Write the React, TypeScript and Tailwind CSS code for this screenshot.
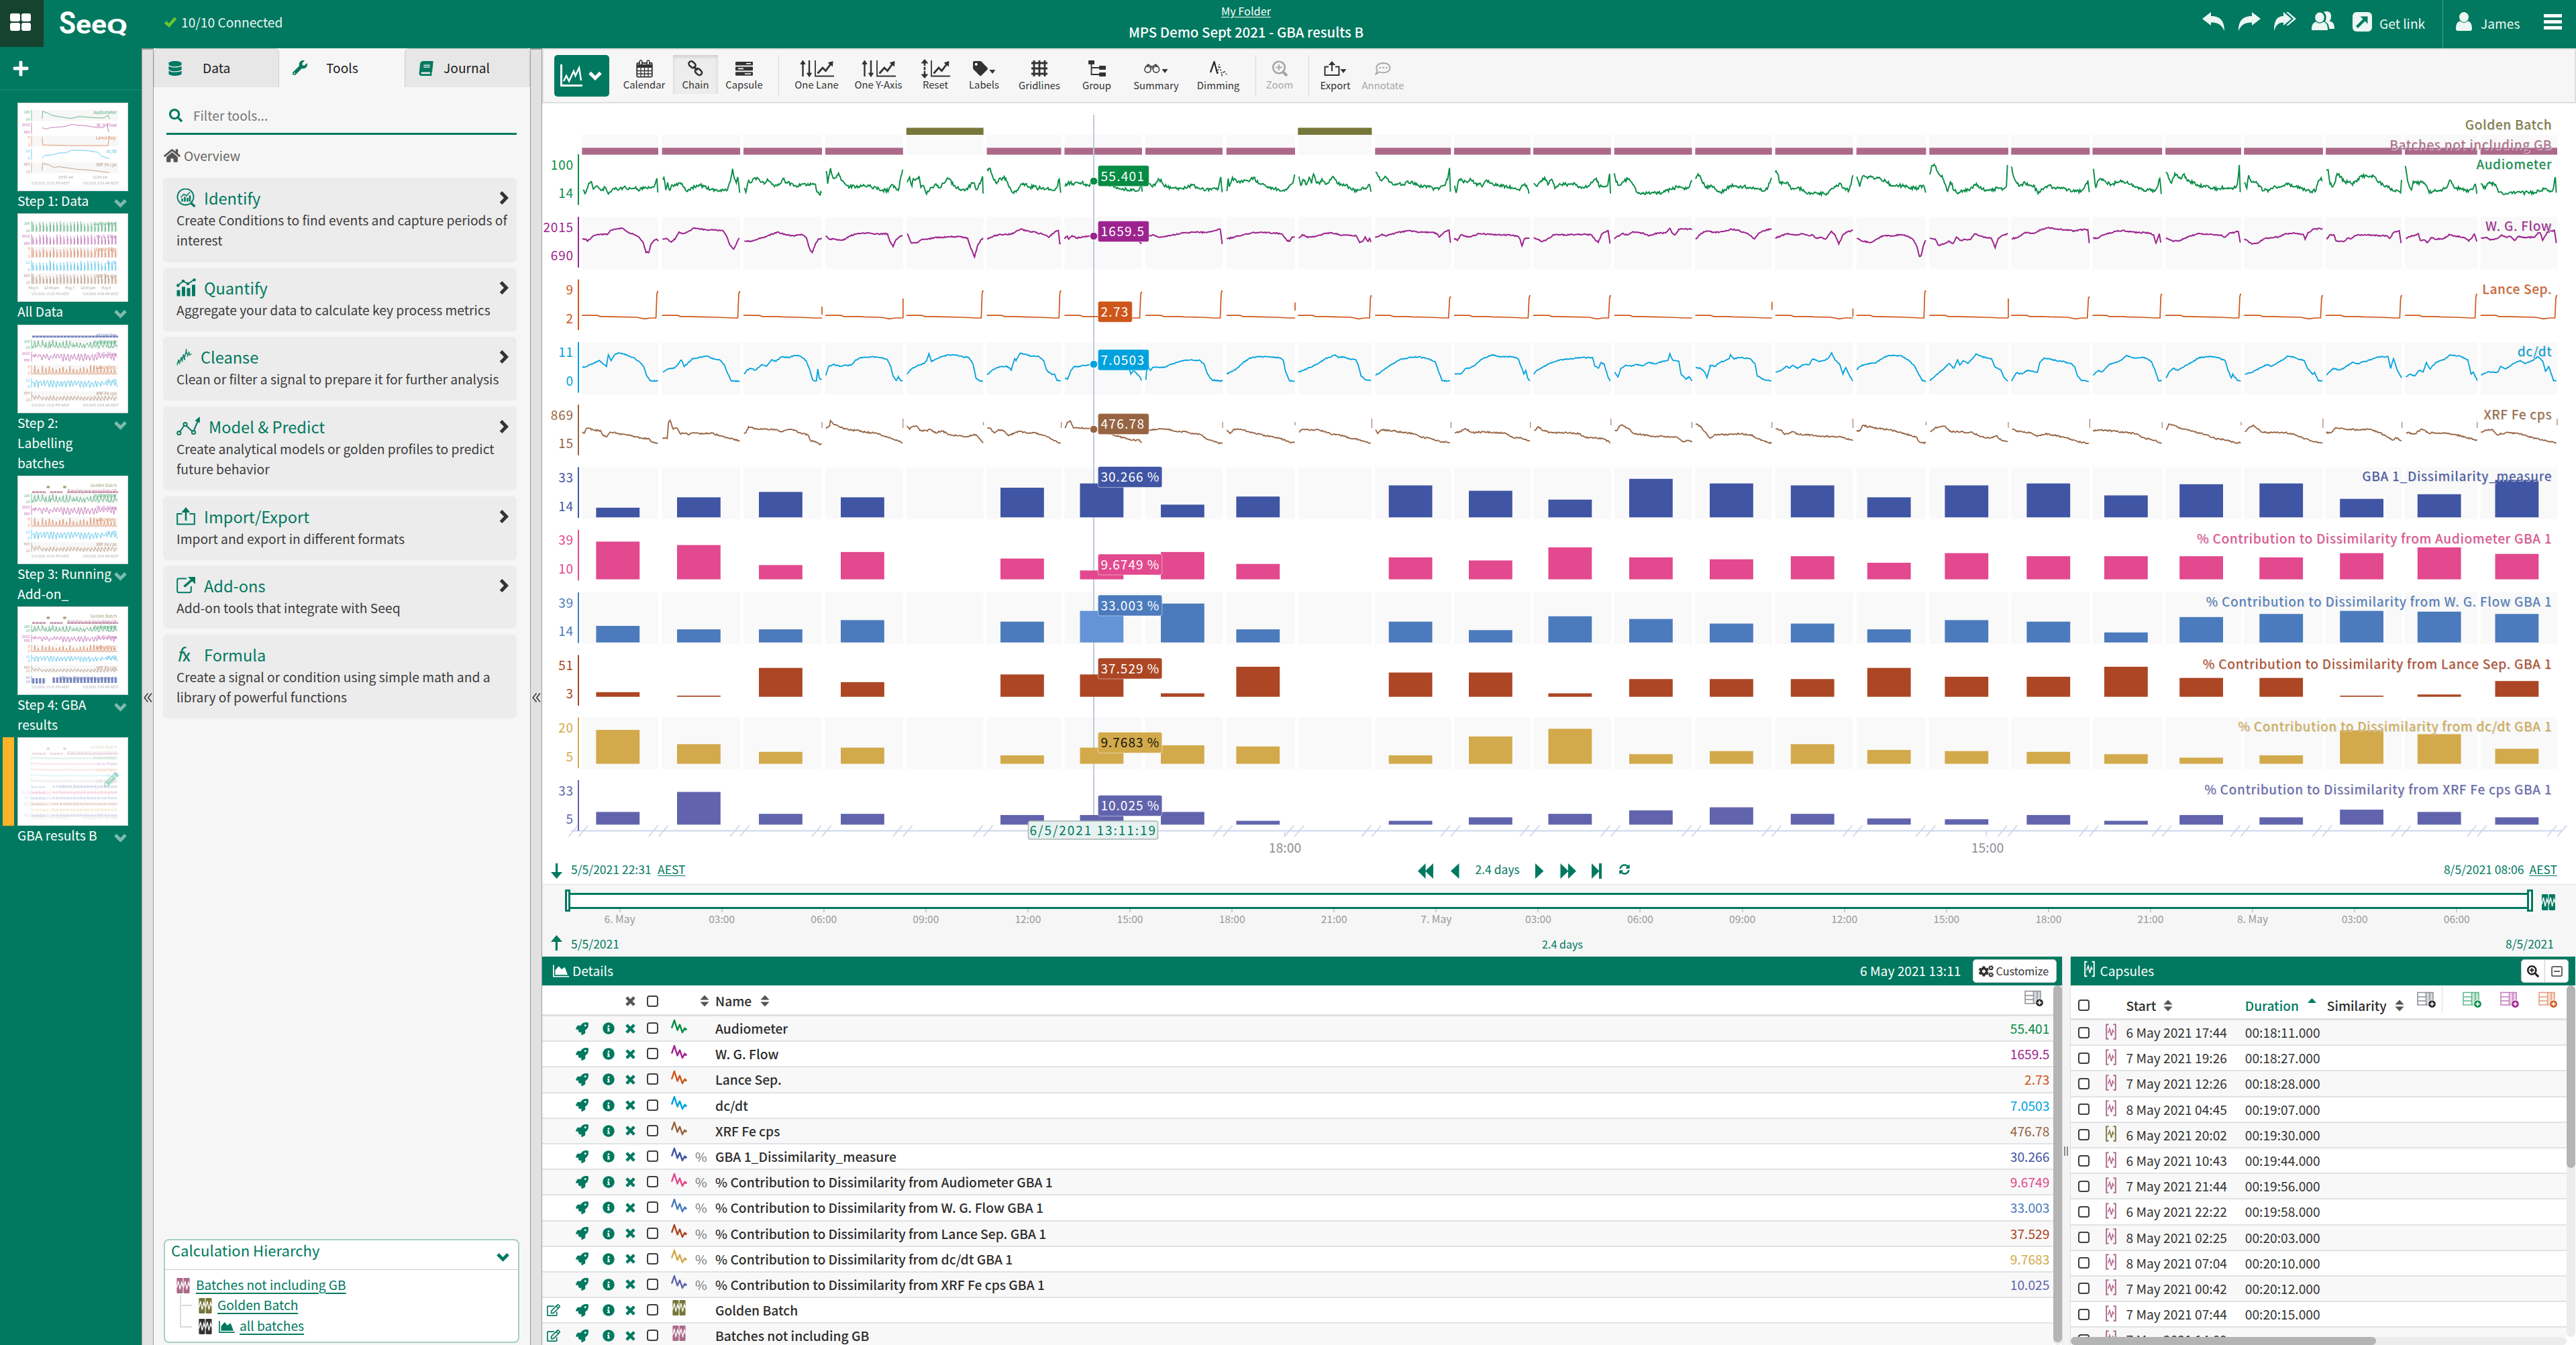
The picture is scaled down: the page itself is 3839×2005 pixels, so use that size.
import type { ReactNode } from 'react';
import {
  FaBook, FaCogs, FaDatabase, FaHome, FaInfoCircle, FaPencilAlt,
  FaPlus, FaRegEdit, FaRocket, FaSearch, FaSearchPlus, FaSyncAlt, FaTag, FaWrench,
} from 'react-icons/fa';

/* ------------------------------------------------------------------ */
/* Colours                                                            */
/* ------------------------------------------------------------------ */
const C = {
  audio: '#068c45', flow: '#9d248f', lance: '#ce561b', dcdt: '#00a2dd', xrf: '#976443',
  gba: '#4055a3', pAudio: '#e2498e', pFlow: '#4b7bbd', pLance: '#ac4624', pDcdt: '#d2aa4b', pXrf: '#6164ac',
  golden: '#77763a', batches: '#ad698a', brand: '#007960',
};

/* ------------------------------------------------------------------ */
/* Icons                                                              */
/* ------------------------------------------------------------------ */
function ChevronDown({ className }: { className: string }) {
  return (
    <svg className={className} viewBox="0 0 20 14" fill="none" stroke="currentColor" strokeWidth="5">
      <path d="M2 2.5 L10 10.5 L18 2.5" />
    </svg>
  );
}

function ChevronRight({ className }: { className: string }) {
  return (
    <svg className={className} viewBox="0 0 14 20" fill="none" stroke="currentColor" strokeWidth="5">
      <path d="M2.5 1.8 L10.5 10 L2.5 18.2" />
    </svg>
  );
}

function Cross({ className }: { className: string }) {
  return (
    <svg className={className} viewBox="0 0 15 15" fill="none" stroke="currentColor" strokeWidth="4.4">
      <path d="M1.8 1.8 L13.2 13.2 M13.2 1.8 L1.8 13.2" />
    </svg>
  );
}

function Trend({ color }: { color: string }) {
  return (
    <svg width="24" height="22" viewBox="0 0 24 22" fill="none" stroke={color} strokeWidth="2.4" strokeLinejoin="round">
      <path d="M1 13.5 L5 2 L9.5 16.5 L13 8.5 L17 20 L20.5 13.5 L21.5 16 L23.5 14.5" />
    </svg>
  );
}

function Condition({ color, className }: { color: string; className: string }) {
  return (
    <svg className={className} viewBox="0 0 20 24">
      <rect x="0" y="0" width="9.4" height="24" rx="1.4" fill={color} />
      <rect x="10.6" y="0" width="9.4" height="24" rx="1.4" fill={color} />
      <path d="M0 15 L2.6 5 L5 18 L7.6 7 L9.4 13 M10.6 15 L13.2 5 L15.6 18 L18.2 7 L20 13" fill="none" stroke="#fff" strokeWidth="1.4" />
    </svg>
  );
}

function CapsuleIcon({ color, className }: { color: string; className: string }) {
  return (
    <svg className={className} viewBox="0 0 16 24" fill="none" stroke={color}>
      <path d="M4.5 1.2 H1.2 V22.8 H4.5 M11.5 1.2 H14.8 V22.8 H11.5" strokeWidth="1.9" />
      <path d="M3.6 14 L6 7.5 L8.6 18 L10.6 9.5 L12.4 13" strokeWidth="1.5" />
    </svg>
  );
}

function TablePlus({ color, dark }: { color: string; dark: string }) {
  return (
    <svg width="29" height="25" viewBox="0 0 29 25" fill="none">
      <path d="M14 1 H24 V20 H14 Z" fill={color} opacity=".35" />
      <path d="M1 1.5 H24 V20 H1 Z M13.5 1 V20 M19 1 V20 M1 8 H13 M1 14 H13" stroke={color} strokeWidth="1.5" />
      <circle cx="22.5" cy="18.7" r="5.8" fill={dark} stroke="#fff" strokeWidth="1" />
      <path d="M22.5 15.6 V21.8 M19.4 18.7 H25.6" stroke="#fff" strokeWidth="1.8" />
    </svg>
  );
}

function AreaChart({ className }: { className: string }) {
  return (
    <svg className={className} viewBox="0 0 25 19" fill="currentColor">
      <path d="M0 0 H1.8 V17.2 H25 V19 H0 Z" />
      <path d="M3.5 15.5 V8.5 L9 2 L13.5 7 L18.5 3.5 L23 15.5 Z" />
    </svg>
  );
}

function Sort() {
  return (
    <svg width="14" height="18" viewBox="0 0 14 18" fill="#555">
      <path d="M7 0.5 L13.6 7.6 H0.4 Z M7 17.5 L13.6 10.4 H0.4 Z" />
    </svg>
  );
}

function Checkbox() {
  return <span className="block h-[17px] w-[17px] rounded-[4px] border-2 border-[#3f3f3f] bg-white" />;
}

function MiniChart({ x, y }: { x: number; y: number }) {
  return (
    <g transform={`translate(${x} ${y})`}>
      <path d="M1 0 V23.5 H29" fill="none" stroke="#333" strokeWidth="1.8" />
      <path d="M4.5 19.5 L12 11 L16.5 15.5 L25 4" fill="none" stroke="#333" strokeWidth="2.8" />
      <path d="M19.5 3.5 L27.5 1 L27 9.5 Z" fill="#333" />
    </g>
  );
}

const upDown = (
  <g stroke="#333" strokeWidth="2.4" fill="#333">
    <path d="M4.5 25 V4" />
    <path d="M4.5 1 L8 6.5 H1 Z" strokeWidth="1" />
    <path d="M14 1 V22" />
    <path d="M14 25.5 L17.5 20 H10.5 Z" strokeWidth="1" />
  </g>
);

const caret = (x: number, y: number) => <path d={`M${x} ${y} h9 l-4.5 6 z`} fill="#333" />;

const toolIcons: Record<string, ReactNode> = {
  Calendar: (
    <svg width="25" height="27" viewBox="0 0 25 27" fill="none" stroke="#333">
      <rect x="1.2" y="5" width="22.6" height="20.6" rx="1.5" strokeWidth="1.8" />
      <path d="M1 9.5 H24" strokeWidth="5" />
      <path d="M7 12 V25 M12.5 12 V25 M18 12 V25 M1 16.5 H24 M1 21 H24" strokeWidth="1.3" />
      <rect x="5.2" y="1" width="3.6" height="7" rx="1.8" fill="#f6f6f6" strokeWidth="1.5" />
      <rect x="16.2" y="1" width="3.6" height="7" rx="1.8" fill="#f6f6f6" strokeWidth="1.5" />
    </svg>
  ),
  Chain: (
    <svg width="25" height="24" viewBox="0 0 25 24" fill="none" stroke="#333" strokeWidth="2.6">
      <rect x="2.2" y="2.5" width="11" height="7.4" rx="3.6" transform="rotate(42 7.5 6)" />
      <rect x="11.2" y="13.5" width="11" height="7.4" rx="3.6" transform="rotate(42 17 17.5)" />
      <path d="M9.5 9 L15.5 14.8" />
    </svg>
  ),
  Capsule: (
    <svg width="26" height="21" viewBox="0 0 26 21" fill="#333">
      <rect width="26" height="5.6" rx="1" />
      <rect y="7.6" width="26" height="5.6" rx="1" />
      <rect y="15.2" width="26" height="5.6" rx="1" />
      <path d="M16 2.8 H23 M4 10.4 H12 M14 18 H23" stroke="#fff" strokeWidth="1.6" />
    </svg>
  ),
  'One Lane': (
    <svg width="51" height="27" viewBox="0 0 51 27">{upDown}<MiniChart x={22} y={1} /></svg>
  ),
  'One Y-Axis': (
    <svg width="51" height="27" viewBox="0 0 51 27">{upDown}<MiniChart x={22} y={1} /></svg>
  ),
  Reset: (
    <svg width="45" height="29" viewBox="0 0 45 29">
      <path d="M6 5 V24" stroke="#333" strokeWidth="2.6" strokeDasharray="5 1.5" />
      <path d="M6 0 L11.5 6.5 H0.5 Z M6 29 L11.5 22.5 H0.5 Z" fill="#333" />
      <MiniChart x={15} y={2} />
    </svg>
  ),
  Labels: (
    <span className="flex items-end">
      <FaTag className="mr-[2px] h-[22px] w-[22px] text-[#333]" />
      <svg width="10" height="12" viewBox="0 0 10 12">{caret(0.5, 3)}</svg>
    </span>
  ),
  Gridlines: (
    <svg width="24" height="24" viewBox="0 0 24 24" stroke="#333" strokeWidth="2.8">
      <path d="M4 0 V24 M12 0 V24 M20 0 V24 M0 4 H24 M0 12 H24 M0 20 H24" />
    </svg>
  ),
  Group: (
    <svg width="26" height="24" viewBox="0 0 26 24" fill="#333">
      <rect width="9" height="6" rx="1" />
      <rect x="16" y="8" width="10" height="6" rx="1" />
      <rect x="16" y="18" width="10" height="6" rx="1" />
      <path d="M4.5 5 V21 H17 M4.5 11 H17" fill="none" stroke="#333" strokeWidth="1.8" />
    </svg>
  ),
  Summary: (
    <span className="flex items-end">
      <svg width="26" height="16" viewBox="0 0 26 16" fill="none" stroke="#444" strokeWidth="1.6">
        <circle cx="5.5" cy="9.5" r="4.6" />
        <circle cx="18" cy="9.5" r="4.6" />
        <path d="M2 6 L6 2 L10.5 5 V9 M21.5 6 L17.5 2 L13 5 V9 M10.5 5 H13" />
      </svg>
      <svg width="10" height="10" viewBox="0 0 10 10">{caret(0.5, 3)}</svg>
    </span>
  ),
  Dimming: (
    <svg width="26" height="23" viewBox="0 0 26 23" fill="none" stroke="#222">
      <path d="M1 17 L6.5 1 L11.5 19" strokeWidth="2.2" />
      <path d="M11.5 18 L14 5 L18 21 L21 14.5 L25 20" strokeWidth="1.6" strokeDasharray="1.8 2.4" />
    </svg>
  ),
  Zoom: (
    <svg width="25" height="25" viewBox="0 0 25 25" fill="none" stroke="#a6a6a6">
      <circle cx="11" cy="10.5" r="8.8" strokeWidth="2.6" />
      <path d="M17 17 L23 23" strokeWidth="4" />
      <path d="M11 6 V15 M6.5 10.5 H15.5" strokeWidth="1.8" />
    </svg>
  ),
  Export: (
    <span className="flex items-end">
      <svg width="24" height="22" viewBox="0 0 24 22" fill="none" stroke="#333" strokeWidth="2">
        <path d="M7 8.5 H1.5 V21 H22.5 V8.5 H17 M12 15 V4" />
        <path d="M12 0 L17.2 6 H6.8 Z" fill="#333" stroke="none" />
      </svg>
      <svg width="10" height="13" viewBox="0 0 10 13">{caret(0.5, 3)}</svg>
    </span>
  ),
  Annotate: (
    <svg width="24" height="19" viewBox="0 0 24 19" fill="none" stroke="#a6a6a6" strokeWidth="1.8">
      <path d="M12.5 1 C18.5 1 22.5 4 22.5 8.2 C22.5 12.3 18.5 15.3 12.5 15.3 C10.5 15.3 8.5 15 7 14.3 L1.5 17.5 L3.6 12.3 C2.6 11 2.3 9.7 2.3 8.2 C2.3 4 6.5 1 12.5 1 Z" />
      <path d="M6.5 8 H9 M11.3 8 H13.8 M16 8 H18.5" strokeWidth="2.2" />
    </svg>
  ),
};

/* ------------------------------------------------------------------ */
/* Header                                                             */
/* ------------------------------------------------------------------ */
function Header() {
  return (
    <header className="flex h-[72px] shrink-0 bg-[#007960] text-white">
      <div className="h-[70px] w-[65px] bg-[#16432f] pl-[15px] pt-5">
        <div className="grid w-[31px] grid-cols-2 gap-[2px]">
          <i className="h-3 rounded-[3px] bg-white" /><i className="h-3 rounded-[3px] bg-white" />
          <i className="h-3 rounded-[3px] bg-white" /><i className="h-3 rounded-[3px] bg-white" />
        </div>
      </div>
      <svg className="ml-6 h-[72px] w-[106px] overflow-visible" viewBox="89 0 106 72" fill="#fff" fontFamily="'Roboto', sans-serif" fontWeight="700">
        <text x="88" y="50" fontSize="46" textLength="25" lengthAdjust="spacingAndGlyphs">S</text>
        <text x="113" y="50" fontSize="39" textLength="46" lengthAdjust="spacingAndGlyphs">ee</text>
        <text x="159" y="50" fontSize="32" textLength="31" lengthAdjust="spacingAndGlyphs">Q</text>
      </svg>
      <div className="ml-[50px] flex w-[1437px] items-center pb-[6px] text-[19.2px] text-[#eaf5f2]">
        <svg className="mr-[7px] h-[16px] w-[18px] text-[#6cc42c]" viewBox="0 0 18 16" fill="none" stroke="currentColor" strokeWidth="4.4">
          <path d="M1.5 8 L7 13 L16.5 2" />
        </svg>
        10/10 Connected
      </div>
      <div className="flex w-[350px] flex-col items-center">
        <div className="mt-[4px] h-[22px] text-[16.3px] leading-[24px] underline underline-offset-[2px]">My Folder</div>
        <div className="mt-[4px] whitespace-nowrap text-[20.4px] font-medium leading-[34px]">MPS Demo Sept 2021 - GBA results B</div>
      </div>
      <div className="ml-auto flex h-full items-start text-[19.2px] leading-[28px] text-[#ecf6f3]">
        <svg className="mt-[18px] h-[28px] w-[34px]" viewBox="0 0 34 28" fill="currentColor">
          <path d="M0 10 L13 0 V6 C26 6 33 12 33 28 C29 19 24 15.5 13 15.5 V20 Z" />
        </svg>
        <svg className="ml-[19px] mt-[18px] h-[28px] w-[34px]" viewBox="0 0 34 28" fill="currentColor">
          <path d="M34 10 L21 0 V6 C8 6 1 12 1 28 C5 19 10 15.5 21 15.5 V20 Z" />
        </svg>
        <svg className="ml-[19px] mt-[18px] h-[28px] w-[34px]" viewBox="0 0 34 28" fill="currentColor">
          <path d="M27 10 L15 0 V6 C6 6 1 12 1 28 C4 19 8 15.5 15 15.5 V20 Z" />
          <path d="M19 0 H22 L34 10 L22 20 H19 L30 10 Z" />
        </svg>
        <svg className="ml-[23px] mt-[17px] h-[28px] w-[34px]" viewBox="0 0 34 28" fill="currentColor">
          <path d="M20 0 C26 -1 30 3 29 8 C29 11 28 13 26.5 14.5 C31 15.5 34 17 34 26 H26 C26 20 24 17 20 15.5 C22 12 23 4 18 1.2 Z" />
          <ellipse cx="12" cy="9" rx="6.8" ry="7.4" />
          <path d="M0 28 C0 20 2 17 6.5 15.6 C10 18.5 14 18.5 17.5 15.6 C22 17 24 20 24 28 Z" />
        </svg>
        <svg className="ml-[27px] mt-[18px] h-[29px] w-[29px]" viewBox="0 0 29 29">
          <rect width="29" height="29" rx="6" fill="#ecf6f3" />
          <path d="M6.5 22.5 L17.5 11.5" stroke="#007960" strokeWidth="4.2" />
          <path d="M11.5 6.5 H22.5 V17.5 Z" fill="#007960" />
        </svg>
        <span className="ml-[11px] mt-[21px] w-[94px]">Get link</span>
        <span className="h-full w-px bg-[#4ca08f]" />
        <svg className="ml-[19px] mt-[18px] h-[28px] w-[24px]" viewBox="0 0 24 28" fill="currentColor">
          <ellipse cx="12" cy="7.5" rx="7" ry="7.5" />
          <path d="M0 25 C0 17 3 14 6.5 13.6 C10 16.8 14 16.8 17.5 13.6 C21 14 24 17 24 25 C24 27 23 28 21 28 H3 C1 28 0 27 0 25 Z" />
        </svg>
        <span className="ml-[13px] mt-[21px] w-[94px]">James</span>
        <div className="mr-[21px] mt-[21px] flex w-[27px] flex-col gap-[4px]">
          <i className="h-[5px] bg-white" /><i className="h-[5px] bg-white" /><i className="h-[5px] bg-white" />
        </div>
      </div>
    </header>
  );
}

/* ------------------------------------------------------------------ */
/* Worksheet thumbnails                                               */
/* ------------------------------------------------------------------ */
const rnd = (seed: number) => {
  let s = seed * 9301 + 49297;
  return () => {
    s = (s * 1103515245 + 12345) % 2147483648;
    return s / 2147483648;
  };
};

function miniPath(kind: string, y0: number, h: number, seed: number) {
  const r = rnd(seed);
  let d = '';
  if (kind === 'spike') {
    for (let x = 22; x < 150; x += 5.2) {
      const t = y0 + r() * h * 0.3;
      d += `M${x.toFixed(1)} ${y0 + h} L${x.toFixed(1)} ${t.toFixed(1)} M${(x + 1).toFixed(1)} ${y0 + h * 0.95} V${(t + 4).toFixed(1)}`;
    }
    return d;
  }
  for (let x = 21; x < 151; x += 1.3) {
    const p = ((x - 21) % 5.2) / 5.2;
    let v = r();
    if (kind === 'wave') v = p < 0.7 ? 0.2 + v * 0.3 : 0.5 + v * 0.5;
    if (kind === 'noise') v = p > 0.75 ? v * 0.5 : 0.55 + v * 0.4;
    if (kind === 'step') v = p > 0.75 ? v * 0.5 : 0.95;
    if (kind === 'saw') v = 0.35 + p * 0.5 + v * 0.12;
    d += `${d ? 'L' : 'M'}${x.toFixed(1)} ${(y0 + v * h).toFixed(1)}`;
  }
  return d;
}

type Lane = { y: number; h: number; c: string; k: string; t: string; a?: string; b?: string };
function Thumb({ lanes, top, wide, faded, single, ticks }: {
  lanes: Lane[]; top?: boolean; wide?: boolean; faded?: boolean; single?: boolean; ticks?: string[];
}) {
  return (
    <svg className="block h-[132px] w-[165px] border border-[#cfd8d6] bg-white" viewBox="0 0 165 132" fontFamily="'Noto Sans CJK SC', sans-serif" fontSize="6.4">
      <g opacity={faded ? 0.25 : 0.7} filter="blur(0.4px)">
        {top && (
          <>
            <rect x="43" y="14.5" width="4.5" height="3.4" fill={C.golden} />
            <rect x="68" y="14.5" width="4.5" height="3.4" fill={C.golden} />
            <path d="M21 24 H42 M48 24 H67 M74 24 H151" stroke={C.batches} strokeWidth="3" strokeDasharray="4.6 .7" />
            <text x="149" y="16" textAnchor="end" fill={C.golden}>Golden Batch</text>
            <text x="149" y="24" textAnchor="end" fill={C.batches}>Batches not including GB</text>
          </>
        )}
        {wide && <path d="M21 17 H151" stroke={C.gba} strokeWidth="3" strokeDasharray="4.6 .7" />}
        {wide && <text x="149" y="17" textAnchor="end" fill={C.gba}>all batches</text>}
        {lanes.map((l, i) => (
          <g key={i}>
            {i % 2 === 0 && <rect x="21" y={l.y} width="130" height={l.h} fill="#f4f4f4" />}
            <path d={`M20 ${l.y} V${l.y + l.h}`} stroke={l.c} strokeWidth=".8" />
            {l.a && <text x="17.5" y={l.y + 5} textAnchor="end" fill={l.c} fontSize="5.4">{l.a}</text>}
            {l.b && <text x="17.5" y={l.y + l.h} textAnchor="end" fill={l.c} fontSize="5.4">{l.b}</text>}
            {l.k === 'bars' ? (
              <path d={`M21 ${l.y + l.h * 0.7} H42 M52 ${l.y + l.h * 0.6} H151`} stroke={l.c} strokeWidth={l.h * (faded ? 0.4 : 0.75)} strokeDasharray="3.4 1.8" />
            ) : (
              <path d={single ? l.k : miniPath(l.k, l.y, l.h, i + 3)} fill="none" stroke={l.c} strokeWidth="0.85" />
            )}
            <text x="149" y={l.y + 6} textAnchor="end" fill={l.c}>{l.t}</text>
          </g>
        ))}
        {ticks && ticks.map((t, i) => (
          <text key={i} x={ticks.length === 2 ? 72 + i * 52 : 23 + i * 27.5} y="114" textAnchor="middle" fill="#777" fontSize="5.4">{t}</text>
        ))}
        <text x="20" y="123" fill="#888" fontSize="5.2">5/5/2021 10:31 PM AEST</text>
        <text x="152" y="123" textAnchor="end" fill="#888" fontSize="5.2">5/8/2021 8:06 AM AEST</text>
      </g>
    </svg>
  );
}

const five = (ys: number[], h: number, kinds: string[]): Lane[] => [
  { y: ys[0], h, c: C.audio, k: kinds[0], t: 'Audiometer', a: '100', b: '14' },
  { y: ys[1], h, c: C.flow, k: kinds[1], t: 'W. G. Flow', a: '2015', b: '690' },
  { y: ys[2], h, c: C.lance, k: kinds[2], t: 'Lance Sep.', a: '9', b: '2' },
  { y: ys[3], h, c: C.dcdt, k: kinds[3], t: 'dc/dt', a: '11', b: '0' },
  { y: ys[4], h, c: C.xrf, k: kinds[4], t: 'XRF Fe cps', a: '869', b: '15' },
];
const kinds = ['noise', 'wave', 'step', 'wave', 'saw'];
const singles = [
  'M36 23 L37 12 L45 15 L50 18 L60 20 L72 22 L80 23 L92 20 L105 21 L118 22 L130 22 L136 18 L138 24',
  'M36 37 L42 39 L48 37 L60 36 L72 35 L80 32 L90 33 L102 34 L115 36 L128 37 L134 31 L137 44',
  'M36 51 L37 63 L80 64 L136 64 L137 50 L138 52',
  'M36 83 L40 79 L52 78 L62 75 L72 75 L80 71 L92 71 L108 72 L120 74 L126 80 L138 84',
  'M36 102 L37 91 L46 93 L54 97 L62 96 L76 98 L90 100 L108 101 L124 103 L138 105',
];
const manyLanes: Lane[] = [
  [C.audio, 'saw', 'Audiometer'], [C.flow, 'saw', 'W. G. Flow'], [C.lance, 'saw', 'Lance Sep.'], [C.dcdt, 'saw', 'dc/dt'],
  [C.xrf, 'saw', 'XRF Fe cps'], [C.gba, 'bars', 'GBA 1_Dissimilarity_measure'],
  [C.pAudio, 'bars', '% Contribution to Dissimilarity from Audiometer'], [C.pFlow, 'bars', '% Contribution to Dissimilarity from W. G. Flow'],
  [C.pLance, 'bars', '% Contribution to Dissimilarity from Lance Sep.'], [C.pDcdt, 'bars', '% Contribution to Dissimilarity from dc/dt'],
  [C.pXrf, 'bars', '% Contribution to Dissimilarity from XRF Fe cps'],
].map(([c, k, t], i) => ({ y: 27 + i * 8.7, h: 5.5, c, k, t }));

const sheets = [
  { title: ['Step 1: Data'], thumb: <Thumb single lanes={five([10, 29.5, 49, 69, 89], 16.5, singles)} ticks={['10:50 am', '11:00 am']} /> },
  { title: ['All Data'], thumb: <Thumb lanes={five([11, 30.5, 50, 70, 90], 16, ['spike', 'spike', 'spike', 'spike', 'spike'])} ticks={['May 6', '12:00 pm', 'May 7', '12:00 pm', 'May 8']} /> },
  { title: ['Step 2:', 'Labelling', 'batches'], thumb: <Thumb wide lanes={five([21, 40, 60, 80, 100], 14.5, kinds)} /> },
  { title: ['Step 3: Running', 'Add-on_'], thumb: <Thumb top lanes={five([26, 44, 62, 81, 100], 14.5, kinds)} /> },
  {
    title: ['Step 4: GBA', 'results'],
    thumb: <Thumb top lanes={[...five([27, 42, 57, 72, 88], 11, kinds), { y: 104, h: 11, c: C.gba, k: 'bars', t: 'GBA 1_Dissimilarity_measure', a: '33', b: '14' }]} />,
  },
  { title: ['GBA results B'], active: true, thumb: <Thumb top faded lanes={manyLanes} /> },
];

function Sidebar() {
  return (
    <aside className="flex w-[211px] shrink-0 flex-col bg-[#007960] text-white">
      <div className="mb-[18px] flex h-[63px] shrink-0 items-start border-b-2 border-[#14836c] pl-[19px] pt-[17px]">
        <FaPlus className="h-[26px] w-[24px]" />
      </div>
      {sheets.map((s) => (
        <div key={s.title[0]} className="mb-[3.3px] shrink-0">
          <div className="flex">
            <span className={s.active ? 'ml-1 mr-[5px] w-[17px] bg-[#fdb229]' : 'w-[26px]'} />
            <div className="relative">
              {s.thumb}
              {s.active && <FaPencilAlt className="absolute left-[129px] top-[51px] h-[24px] w-[22px] text-[#a4d9c9]" />}
            </div>
          </div>
          <div className="flex h-fit justify-between pl-[26px] pr-[22px]">
            <div className="-mt-px mb-px whitespace-nowrap text-[19.2px] leading-[30px]">
              {s.title.map((t) => <div key={t}>{t}</div>)}
            </div>
            <ChevronDown className="mt-[11px] h-[14px] w-[19px] text-[#7dbbae]" />
          </div>
        </div>
      ))}
    </aside>
  );
}

function Splitter() {
  return (
    <div className="flex w-[18px] shrink-0 items-center justify-center border-x border-t-2 border-[#9b9b9b] bg-[#e1e1e1]">
      <svg width="13" height="14" viewBox="0 0 13 14" fill="none" stroke="#333" strokeWidth="1.5">
        <path d="M6.5 0.5 L1.2 7 L6.5 13.5 M12 0.5 L6.7 7 L12 13.5" />
      </svg>
    </div>
  );
}

/* ------------------------------------------------------------------ */
/* Tools panel                                                        */
/* ------------------------------------------------------------------ */
const g = '#007960';
const cards: { t: string; d: string[]; h: string; gap: string; chev: boolean; icon: ReactNode }[] = [
  {
    t: 'Identify', d: ['Create Conditions to find events and capture periods of', 'interest'], h: 'h-[125.5px]', gap: 'w-[41px]', chev: true,
    icon: (
      <svg width="29" height="28" viewBox="0 0 29 28" fill="none" stroke={g}>
        <circle cx="13.5" cy="12.5" r="12" strokeWidth="1.9" />
        <path d="M22 22 L27.5 27" strokeWidth="3.4" />
        <path d="M8.5 19.5 V15 M12.5 19.5 V12.5 M16.5 19.5 V14 M20 19.5 V10.5" strokeWidth="2.6" />
        <path d="M6.5 13.5 L11 8.5 L15 11 L20 5.5" strokeWidth="1.5" />
      </svg>
    ),
  },
  {
    t: 'Quantify', d: ['Aggregate your data to calculate key process metrics'], h: 'h-[95px]', gap: 'w-[41px]', chev: true,
    icon: (
      <svg width="29" height="27" viewBox="0 0 29 27" fill="none" stroke={g}>
        <path d="M3 26.5 V17.5 M10.5 26.5 V12.5 M18 26.5 V14.5 M25.5 26.5 V9.5" strokeWidth="5" />
        <path d="M2 10.5 L10 4 L17 8 L27 1.5" strokeWidth="1.8" />
        <g fill={g} stroke="none"><circle cx="2.3" cy="10.5" r="2.3" /><circle cx="10" cy="4" r="2.3" /><circle cx="17" cy="8" r="2.3" /><circle cx="26.5" cy="2.3" r="2.3" /></g>
      </svg>
    ),
  },
  {
    t: 'Cleanse', d: ['Clean or filter a signal to prepare it for further analysis'], h: 'h-[95px]', gap: 'w-[36px]', chev: true,
    icon: (
      <svg width="24" height="27" viewBox="0 0 24 27" fill="none" stroke={g} strokeWidth="1">
        <path d="M1 26 L3 17 L4.5 24 L7 13 L8.5 21 L10 9 L12 18 L14.5 1 L16.5 13 L18.5 5 L20 11 L23 8" />
        <path d="M0.5 23 L5 19 L8 16 L11 13 L14 7 L18 9 L21 9" strokeWidth="1.2" />
      </svg>
    ),
  },
  {
    t: 'Model & Predict', d: ['Create analytical models or golden profiles to predict', 'future behavior'], h: 'h-[125.5px]', gap: 'w-[48px]', chev: true,
    icon: (
      <svg width="36" height="29" viewBox="0 0 36 29" fill="none" stroke={g} strokeWidth="2">
        <path d="M5 22.5 L11.5 13.5 M14.5 13.5 L24 22.5 M26 20.5 L32.5 5" />
        <circle cx="3.8" cy="24.5" r="2.6" /><circle cx="13" cy="11.5" r="2.6" /><circle cx="25.5" cy="23.5" r="2.6" />
        <path d="M34.8 0 V9.5 L27.5 6 Z" fill={g} stroke="none" />
      </svg>
    ),
  },
  {
    t: 'Import/Export', d: ['Import and export in different formats'], h: 'h-[95px]', gap: 'w-[41px]', chev: true,
    icon: (
      <svg width="28" height="27" viewBox="0 0 28 27" fill="none" stroke={g} strokeWidth="2">
        <path d="M8.5 10 H1.2 V25.5 H26.8 V10 H19.5" />
        <path d="M14 20 V7" strokeWidth="2.6" />
        <path d="M14 0 L20.5 8 H7.5 Z" fill={g} stroke="none" />
      </svg>
    ),
  },
  {
    t: 'Add-ons', d: ['Add-on tools that integrate with Seeq'], h: 'h-[94.5px]', gap: 'w-[41px]', chev: true,
    icon: (
      <svg width="29" height="25" viewBox="0 0 29 25" fill="none" stroke={g} strokeWidth="2">
        <path d="M15 2.5 H3.5 Q1.2 2.5 1.2 4.8 V21 Q1.2 23.3 3.5 23.3 H19.5 Q21.8 23.3 21.8 21 V14" />
        <path d="M11.5 14.5 L23 4.5" strokeWidth="3.6" />
        <path d="M17 0 H28 V11 Z" fill={g} stroke="none" />
      </svg>
    ),
  },
  {
    t: 'Formula', d: ['Create a signal or condition using simple math and a', 'library of powerful functions'], h: 'h-[125.5px]', gap: 'w-[41px]', chev: false,
    icon: (
      <span className="flex items-baseline leading-[28px]">
        <span className="text-[27px] italic">f</span><span className="text-[23px] font-medium">x</span>
      </span>
    ),
  },
];

function TabButton({ label, icon, active, w }: { label: string; icon: ReactNode; active?: boolean; w: string }) {
  return (
    <div className={`${active ? 'bg-[#f6f6f6]' : 'border border-b-0 border-[#cfcfcf] bg-[#e7e7e7]'} ${w} flex h-[58px] items-center rounded-t-[7px] pl-[19px] text-[19.2px] text-[#1c1c1c]`}>
      <span className="flex w-6 justify-center text-[#007960]">{icon}</span>
      <span className={label === 'Journal' ? 'ml-[14px]' : label === 'Tools' ? 'ml-[27px]' : 'ml-[29px]'}>{label}</span>
    </div>
  );
}

function ToolsPanel() {
  return (
    <section className="flex w-[561px] shrink-0 flex-col bg-[#f6f6f6]">
      <div className="flex shrink-0">
        <TabButton w="w-[187px]" label="Data" icon={<FaDatabase className="h-[22px] w-[20px]" />} />
        <TabButton w="w-[187px]" label="Tools" active icon={<FaWrench className="h-[22px] w-[22px]" />} />
        <TabButton w="w-[187px]" label="Journal" icon={<FaBook className="h-[22px] w-[22px] -skew-x-6" />} />
      </div>
      <div className="ml-[19px] mr-[20px] mt-[20px] flex h-[51px] shrink-0 items-center border-b-[3px] border-[#007960] pb-[3px] text-[19.2px] text-[#777]">
        <FaSearch className="ml-1 mr-4 h-[20px] w-[20px] -translate-y-px text-[#007960]" />
        <span>Filter tools...</span>
      </div>
      <div className="ml-[15px] mt-[16px] flex h-[30px] shrink-0 items-center text-[19.2px] text-[#666]">
        <FaHome className="mr-[5px] h-[24px] w-[25px] text-[#555]" />Overview
      </div>
      <div className="mx-auto mt-[18px] flex w-[527px] -translate-x-[3px] flex-col gap-[8.4px]">
        {cards.map((c) => (
          <div key={c.t} className={`${c.h} rounded-[6px] bg-[#ececec] pl-[20px] pr-[12px]`}>
            <div className="flex h-[48px] items-center pt-[12px]">
              <span className={`${c.gap} shrink-0 text-[#007960]`}>{c.icon}</span>
              <span className="text-[23.6px] leading-[34px] text-[#007960]">{c.t}</span>
              {c.chev && <ChevronRight className="ml-auto h-[20px] w-[14px] text-[#333]" />}
            </div>
            <div className="whitespace-nowrap text-[19.25px] leading-[30px] text-[#3c3c3c]">
              {c.d.map((d) => <div key={d}>{d}</div>)}
            </div>
          </div>
        ))}
      </div>
      <div className="mb-[3px] ml-[15px] mt-auto h-[155px] w-[530px] shrink-0 rounded-[8px] border-2 border-[#a5cfc6] bg-white text-[#007960]">
        <div className="flex h-[44px] items-start justify-between border-b border-[#ccc] pl-[9px] pr-[13px]">
          <span className="-mt-[2px] text-[22.1px] leading-[32px]">Calculation Hierarchy</span>
          <ChevronDown className="mt-[18px] h-[14px] w-[19px]" />
        </div>
        <div className="flex h-[47px] items-center pl-[17px]">
          <Condition color={C.batches} className="mr-[9px] h-[23px] w-[20px]" />
          <span className="-mt-[4px] text-[19.2px] leading-[26px] underline decoration-2 underline-offset-[4px]">Batches not including GB</span>
        </div>
        <div className="-mt-[9px] ml-[22px] flex h-[66px]">
          <svg className="h-[58px] w-[18px]" viewBox="0 0 18 58" fill="none" stroke="#ccc" strokeWidth="1.3">
            <path d="M1 0 V47 H18 M3 15 H18" />
          </svg>
          <div className="ml-[10px] flex flex-col text-[19.2px]">
            <div className="flex h-[31px] items-center">
              <Condition color={C.golden} className="mr-[8px] h-[23px] w-[20px]" />
              <span className="-mt-[4px] leading-[26px] underline decoration-2 underline-offset-[4px]">Golden Batch</span>
            </div>
            <div className="flex h-[31px] items-center">
              <Condition color="#333" className="mr-[10px] h-[23px] w-[20px]" />
              <AreaChart className="mr-[7px] h-[18px] w-[24px]" />
              <span className="-mt-[4px] leading-[26px] underline decoration-2 underline-offset-[4px]">all batches</span>
            </div>
          </div>
        </div>
      </div>
    </section>
  );
}

/* ------------------------------------------------------------------ */
/* Toolbar                                                            */
/* ------------------------------------------------------------------ */
function Tool({ name, w, dim, active, low }: { name: string; w: string; dim?: boolean; active?: boolean; low?: boolean }) {
  return (
    <div className={`${w} ${active ? 'bg-[#ededed] shadow-[inset_0_3px_5px_rgba(0,0,0,0.13)]' : ''} flex h-[58px] flex-col items-center`}>
      <div className="flex h-[39px] items-center justify-center pb-[3px] pt-1">{toolIcons[name]}</div>
      <div className={`${dim ? 'text-[#a6a6a6]' : 'text-[#333]'} ${low ? 'mt-[1px]' : ''} whitespace-nowrap text-[14.85px] leading-[10px]`}>{name}</div>
    </div>
  );
}

function Toolbar() {
  return (
    <div className="flex h-[82px] shrink-0 border-2 border-[#dfdfdf] bg-[#f6f6f6] pl-[16px] pt-[8px]">
      <div className="flex h-[62px] w-[82px] items-center rounded-[5px] bg-[#007960] pl-[9px] text-white">
        <svg width="34" height="34" viewBox="0 0 34 34" fill="none" stroke="#fff">
          <path d="M1.5 0 V31.5 H33" strokeWidth="3" />
          <path d="M5 25 L9 17 L13 25 L20 10 L22.5 17 L28 5 L31 24" strokeWidth="2.4" />
        </svg>
        <ChevronDown className="ml-[8px] h-[14px] w-[20px]" />
      </div>
      <Tool name="Calendar" w="ml-[14px] w-[76px]" />
      <Tool name="Chain" w="ml-[5px] w-[67px]" active />
      <Tool name="Capsule" w="ml-[4px] w-[70px]" />
      <span className="ml-[16px] h-[60px] w-px bg-[#d9d9d9]" />
      <Tool name="One Lane" w="ml-[16px] w-[80px]" />
      <Tool name="One Y-Axis" w="ml-[12px] w-[80px]" />
      <Tool name="Reset" w="ml-[15px] w-[60px]" />
      <Tool name="Labels" w="ml-[12.5px] w-[60px]" />
      <Tool name="Gridlines" w="ml-[14.5px] w-[76px]" low />
      <Tool name="Group" w="ml-[17.5px] w-[60px]" low />
      <Tool name="Summary" w="ml-[18.5px] w-[80px]" low />
      <Tool name="Dimming" w="ml-[14.5px] w-[76px]" low />
      <span className="ml-[17.5px] h-[62px] w-px bg-[#d9d9d9]" />
      <Tool name="Zoom" w="ml-[10px] w-[50px]" dim />
      <span className="ml-[18px] h-[60px] w-px bg-[#d9d9d9]" />
      <Tool name="Export" w="ml-[9px] w-[60px]" low />
      <Tool name="Annotate" w="ml-[3px] w-[76px]" dim low />
    </div>
  );
}

/* ------------------------------------------------------------------ */
/* Chart data                                                         */
/* ------------------------------------------------------------------ */
const segs: [number, number][] = [
  [867.3, 981], [986.6, 1103], [1108, 1225], [1230, 1345.8], [1350.7, 1465.7], [1470.6, 1581.5], [1586.4, 1702], [1707, 1822],
  [1827.7, 1930], [1934.3, 2044.4], [2049.3, 2162.3], [2167, 2280.8], [2285, 2400.8], [2405.7, 2521.5], [2526.4, 2640.7],
  [2645.6, 2761.4], [2766.6, 2870.4], [2875.3, 2993], [2997.2, 3114.3], [3118.5, 3222.2], [3227.1, 3340], [3344.2, 3461.9],
  [3466.1, 3579.7], [3583.9, 3691.8], [3696.7, 3811],
];
/* Sample strips are stored in three blocks, each with its own x origin: segments 1-8, 9-16 and 17-25. */
const origin = (i: number) => (i < 8 ? 800 : i < 16 ? 1700 : 2740);

const audio = `98,850 104,862 110,822 116,815 120,845 130,835 138,850 145,840 152,866 162,842 175,845 185,838 195,845 210,838 218,850 230,838 245,838 252,820 255,800 257,860
267,800 270,795 274,850 278,815 282,850 287,825 295,830 305,820 312,835 320,858 330,840 345,825 355,835 370,848 390,852 405,852 411,810 416,755 420,800 424,820 427,790 431,862
441,840 444,860 450,805 455,815 462,800 470,795 478,815 485,820 490,800 496,810 503,830 515,825 523,800 530,815 540,822 550,830 560,830 570,822 578,830 585,822 592,825 595,860 600,868 605,862
615,765 618,820 624,750 630,800 636,795 641,775 648,805 655,825 665,835 680,832 690,830 700,835 708,828 715,840 725,840 735,852 748,850 755,825 762,838 768,850 777,760
787,815 792,795 797,830 800,800 806,800 812,790 816,840 822,830 828,866 838,840 848,825 855,838 865,820 873,795 878,800 885,830 893,840 903,848 915,845 922,825 928,815 935,850 942,820 947,790 948,866
957,755 962,755 967,780 975,820 982,800 988,805 993,790 998,810 1005,840 1013,862 1020,850 1028,825 1038,822 1048,840 1055,830 1062,842 1070,840 1080,845 1090,845 1100,850 1105,835 1110,800 1113,862
1122,835 1128,820 1135,815 1140,830 1148,815 1158,815 1165,825 1172,830 1182,808 1192,815 1215,825 1230,838 1245,845 1262,848 1278,850 1285,830 1286,860
1295,830 1303,820 1308,835 1315,820 1322,800 1330,820 1340,838 1355,838 1365,842 1380,840 1393,828 1402,835 1410,845 1420,852 1435,845 1448,845 1453,790 1456,862
183,855 186,800 188,835 195,795 203,810 213,812 220,805 230,810 240,795 250,820 262,825 273,840 285,845 295,850 305,852 312,840 318,825 323,820 327,780
336,790 340,830 345,800 352,825 358,795 363,820 367,780 373,820 380,820 385,800 392,825 400,815 410,790 417,820 425,825 435,830 445,840 455,855 462,848 470,840 480,840 486,828 489,860
499,770 505,790 512,810 517,795 525,800 535,825 545,820 555,825 565,815 575,815 590,830 605,832 620,842 635,842 645,830 652,800 656,750 658,858
667,830 670,862 675,805 682,805 690,815 700,800 710,820 718,825 727,830 735,805 745,820 760,830 775,835 790,840 803,848 812,830 818,830 823,845 826,866
835,820 842,830 850,810 858,795 865,825 873,800 880,840 890,820 900,825 912,825 920,820 928,835 940,840 955,825 968,800 975,835 985,835 992,830 996,780 998,862
1006,775 1010,815 1018,830 1025,810 1035,800 1045,825 1055,860 1070,866 1090,864 1110,862 1125,845 1140,838 1155,845 1165,840 1171,805
1179,800 1184,775 1190,800 1198,830 1205,840 1213,828 1220,845 1232,860 1242,852 1253,830 1265,832 1280,835 1295,838 1310,840 1323,855 1333,835 1340,795
1348,770 1353,775 1358,820 1365,815 1375,815 1382,845 1395,840 1408,850 1418,866 1440,866 1460,865 1470,845 1480,830 1486,820 1492,840 1505,852 1513,785
39,790 45,835 52,785 60,795 68,785 78,800 90,800 100,810 110,825 125,830 140,832 155,840 168,842 175,832 182,835 185,860
194,780 198,740 205,740 212,775 220,785 227,825 232,855 238,808 245,850 252,862 265,855 280,845 293,820 300,838 312,852 325,850 340,840 352,845 357,830 359,740
368,745 372,790 378,815 385,835 395,815 405,825 415,830 424,866 435,845 445,828 458,840 470,838 485,852 500,852 515,855 523,840 530,805 533,862
542,755 547,840 552,805 560,805 570,820 582,825 590,815 600,805 612,815 625,832 640,842 655,850 670,852 678,835 683,800 686,866
696,770 704,805 708,820 715,775 720,780 727,800 735,780 742,810 755,815 765,830 780,835 795,842 808,845 820,838 838,845 848,825 852,740 854,862
863,815 868,840 872,785 880,815 888,815 895,830 903,852 915,850 925,835 940,835 952,820 965,835 978,835 990,845 1005,855 1015,850 1020,810 1026,795 1029,810
1037,760 1041,760 1045,820 1050,838 1056,815 1060,775 1068,790 1075,815 1085,815 1093,825 1100,810 1110,790 1120,785 1130,790 1140,790 1150,815 1160,830 1172,840 1182,855 1195,860 1197,805
1205,742 1210,810 1218,850 1222,810 1230,820 1240,815 1248,825 1256,862 1268,850 1280,852 1292,840 1300,805 1310,845 1322,840 1335,855 1348,850 1354,825 1357,865
1366,820 1375,845 1380,820 1388,820 1397,825 1405,862 1425,866 1440,862 1460,862 1480,862 1488,850 1500,845 1512,855 1519,850 1524,795 1526,862`;

const flow = `97,1070 103,1068 108,1078 118,1058 130,1048 150,1048 157,1030 170,1024 180,1020 192,1035 205,1048 215,1058 225,1080 232,1128 238,1130 242,1095 248,1078 254,1070 258,1078
267,1068 275,1065 286,1082 295,1065 302,1038 310,1045 320,1038 334,1020 350,1026 370,1028 395,1030 402,1050 410,1095 418,1115 424,1090 430,1065
441,1078 458,1078 470,1068 490,1055 512,1038 530,1050 545,1055 562,1048 572,1060 580,1115 585,1130 592,1090 598,1070 605,1065
614,1055 622,1070 632,1068 645,1075 655,1070 665,1055 680,1045 700,1042 720,1046 745,1046 750,1080 757,1103 762,1075 770,1060 777,1055
787,1045 795,1085 810,1085 818,1070 830,1070 845,1062 870,1060 895,1058 915,1065 922,1110 930,1148 937,1095 945,1070 948,1065
957,1070 970,1055 985,1048 1005,1048 1015,1040 1027,1025 1040,1032 1060,1040 1078,1050 1088,1062 1095,1045 1108,1030 1111,1090 1113,1090
1121,1068 1127,1055 1130,1070 1137,1055 1147,1065 1160,1058 1182,1056 1230,1060 1270,1058 1285,1090
1293,1060 1310,1050 1320,1060 1345,1055 1370,1042 1395,1038 1420,1040 1440,1030 1452,1025 1456,1092
183,1068 195,1062 215,1052 235,1042 270,1040 300,1045 310,1075 317,1078 322,1060 327,1058
336,1065 343,1050 355,1062 370,1058 390,1045 405,1042 430,1052 458,1055 465,1085 472,1078 477,1060 483,1080 486,1065 489,1083
498,1062 513,1048 520,1055 545,1040 570,1032 590,1038 615,1038 630,1045 634,1060 645,1038 655,1030 658,1085
666,1065 673,1075 680,1050 690,1058 700,1060 718,1045 740,1048 770,1050 800,1055 806,1070 810,1100 815,1068 826,1065
835,1065 845,1070 852,1080 862,1072 878,1050 900,1050 930,1048 958,1050 966,1075 972,1083 980,1045 993,1032 997,1090
1006,1068 1022,1045 1033,1050 1045,1038 1065,1042 1080,1055 1098,1042 1115,1042 1124,1022 1130,1045 1136,1050 1143,1025 1171,1024
1179,1070 1190,1045 1202,1032 1218,1040 1240,1035 1255,1025 1270,1030 1290,1045 1304,1068 1313,1042 1325,1032 1340,1022
1348,1065 1360,1055 1375,1045 1390,1052 1405,1045 1420,1055 1427,1050 1435,1065 1445,1060 1455,1070 1467,1035 1475,1050 1483,1092 1492,1050 1500,1038 1513,1030
39,1065 50,1078 68,1085 80,1070 95,1055 115,1055 135,1048 150,1060 160,1075 167,1105 172,1148 176,1140 180,1100 185,1075
194,1065 205,1068 213,1098 225,1090 236,1078 243,1090 251,1060 258,1075 270,1070 280,1072 290,1045 300,1055 315,1062 325,1065 333,1108 340,1065 350,1052 360,1045
368,1068 380,1062 395,1042 418,1042 430,1028 445,1018 470,1025 495,1030 502,1035 510,1028 530,1026 533,1088
541,1065 550,1065 570,1045 590,1035 605,1030 625,1038 660,1042 670,1050 675,1088 682,1045 685,1085
696,1065 710,1078 725,1075 745,1058 765,1045 790,1048 812,1052 822,1060 830,1045 850,1035 854,1085
863,1068 880,1092 893,1085 905,1068 920,1062 935,1060 950,1045 970,1042 988,1048 992,1070 998,1040 1010,1025 1029,1022
1038,1070 1045,1050 1053,1050 1058,1078 1075,1078 1083,1065 1090,1068 1098,1052 1125,1050 1165,1055 1172,1065 1180,1040 1192,1032 1196,1088
1206,1065 1220,1055 1233,1045 1237,1075 1247,1075 1252,1085 1260,1062 1270,1070 1290,1065 1298,1048 1310,1055 1330,1062 1340,1078 1352,1048 1357,1080
1366,1065 1376,1062 1385,1072 1400,1068 1410,1050 1420,1060 1430,1058 1437,1075 1445,1058 1460,1062 1480,1060 1487,1042 1492,1042 1497,1075 1507,1038 1522,1030 1526,1088`;

const dcdt = `97,188 105,185 115,180 125,175 133,170 140,178 148,185 152,155 158,170 165,155 175,150 190,155 205,162 217,172 227,185 232,205 240,222 257,223
268,200 275,195 283,190 292,190 300,180 307,168 313,185 320,178 330,165 345,162 360,158 375,165 388,168 398,180 406,205 414,223 431,223
440,205 446,195 455,190 465,195 478,180 488,185 498,168 508,172 520,160 535,162 550,156 562,160 572,170 580,195 586,220 594,223 597,192 600,215 605,220
614,208 620,185 630,180 645,185 655,182 668,182 678,168 690,162 710,160 730,162 745,168 752,185 757,210 764,222 768,212 773,222 777,223
787,205 793,195 798,190 806,185 815,180 822,178 828,170 833,152 838,172 845,168 855,162 870,156 890,155 905,160 918,162 927,180 933,215 940,222 948,223
957,207 967,195 975,190 987,185 1000,185 1008,195 1015,165 1018,170 1027,150 1040,155 1052,158 1065,158 1077,170 1083,195 1093,205 1100,205 1105,222 1113,223
1122,215 1127,218 1135,195 1143,185 1152,185 1163,182 1182,180 1200,170 1230,165 1258,190 1262,205 1268,195 1275,205 1280,210 1285,222
1294,220 1297,175 1303,195 1310,187 1335,187 1345,180 1360,175 1380,168 1410,170 1418,180 1425,205 1435,221 1457,223
183,205 190,200 198,195 205,190 218,175 230,165 245,160 270,160 295,162 303,170 308,200 316,222 327,223
335,200 345,195 355,190 370,182 380,175 392,165 405,160 413,155 420,162 430,160 440,165 457,168 463,185 468,210 478,220 489,222
499,208 510,200 520,190 535,178 550,168 570,162 590,160 610,165 625,172 632,195 640,222 657,223
667,205 680,205 690,190 702,188 712,180 722,168 733,162 748,155 765,160 790,160 802,165 808,185 814,205 818,195 822,215 827,223
835,205 842,195 850,190 862,182 872,175 885,170 900,167 915,165 930,162 960,162 965,185 973,190 978,175 985,180 992,210 997,223
1007,200 1014,212 1020,190 1030,182 1042,185 1052,180 1065,183 1080,175 1095,178 1110,172 1120,170 1124,152 1130,168 1143,172 1148,205 1158,218 1165,212 1171,222
1179,188 1190,190 1198,200 1203,215 1210,182 1220,185 1230,175 1240,170 1250,165 1253,155 1260,165 1275,162 1295,165 1305,178 1310,210 1325,220 1340,222
1349,200 1360,195 1372,185 1378,190 1385,182 1395,190 1408,180 1420,180 1428,165 1440,172 1450,170 1460,165 1468,150 1475,168 1485,180 1492,205 1498,188 1506,210 1513,223
38,193 50,182 65,178 80,175 92,165 105,157 120,157 135,158 150,170 162,185 170,205 178,222 186,223
194,222 205,210 220,195 235,178 245,190 253,168 258,182 265,170 275,178 285,165 292,153 305,160 325,165 332,185 345,195 352,215 360,223
368,223 378,202 390,205 402,195 415,198 423,200 428,175 437,163 455,168 475,172 495,178 502,185 508,210 516,222 532,223
541,208 553,195 560,200 575,180 590,175 605,165 612,157 630,163 650,162 665,172 673,195 680,222 687,223
696,215 703,200 712,190 720,195 735,185 750,175 765,163 780,160 800,160 822,170 828,195 835,215 838,205 848,222 855,223
864,205 880,200 895,190 910,180 920,185 935,175 948,165 955,158 970,162 990,170 997,190 1008,205 1012,200 1020,222 1029,223
1037,207 1052,190 1065,195 1080,185 1092,175 1105,178 1118,172 1130,168 1150,160 1168,160 1174,190 1180,165 1188,195 1197,215
1206,212 1215,205 1225,210 1235,195 1243,200 1250,175 1258,192 1270,175 1280,170 1290,165 1300,155 1320,158 1338,168 1345,205 1350,200 1358,222
1366,207 1380,200 1392,200 1402,200 1408,185 1418,192 1430,182 1440,175 1450,170 1460,178 1475,170 1487,160 1497,170 1503,198 1510,185 1520,222 1526,223`;

const xrf = `97,355 101,358 106,345 120,350 135,352 142,365 148,368 155,357 170,358 185,362 200,365 220,370 238,373 245,382 257,385
267,370 277,372 280,330 283,325 290,348 298,345 305,360 315,358 322,362 330,358 345,360 370,358 390,365 410,372 431,378
440,360 444,357 450,342 465,347 490,348 510,350 517,355 530,350 545,350 560,358 575,362 582,378 592,380 600,387 605,387
614,345 622,340 624,325 630,335 645,343 665,350 685,352 700,356 720,358 735,365 755,372 765,377 777,384
786,340 792,348 800,340 808,340 815,352 828,352 835,348 848,358 860,352 875,362 895,365 915,367 932,362 940,372 948,384
957,345 963,345 972,358 980,350 990,350 1002,365 1015,358 1025,353 1040,358 1055,357 1070,362 1085,368 1100,378 1113,385
1122,345 1127,330 1133,327 1140,345 1160,345 1182,348 1200,352 1230,365 1245,370 1265,377 1280,375 1285,384
1295,352 1305,350 1325,347 1345,350 1360,355 1380,355 1395,360 1410,362 1425,375 1445,383 1457,385
183,350 190,360 197,348 212,348 230,355 245,360 265,365 285,370 305,375 315,382 327,383
336,355 345,348 360,350 378,350 390,355 410,362 430,365 445,372 465,375 478,382 489,384
499,350 503,360 512,350 535,352 560,357 580,360 595,368 615,372 635,380 657,383
667,358 677,355 690,347 705,357 730,355 755,357 775,358 790,370 810,372 827,378
836,352 845,342 857,352 870,357 895,357 915,358 932,360 945,370 965,370 980,372 998,382
1007,352 1013,350 1017,340 1023,337 1035,345 1048,360 1065,362 1085,367 1110,367 1140,370 1150,380 1165,378 1171,381
1179,335 1190,342 1198,355 1210,372 1222,362 1245,362 1265,360 1295,362 1310,372 1325,378 1340,385
1349,348 1360,350 1368,362 1385,355 1400,362 1425,363 1450,367 1475,367 1495,370 1513,378
38,352 45,352 52,338 68,343 90,347 108,350 125,355 140,360 165,368 172,382 185,384
195,355 205,345 225,340 232,348 240,355 260,355 285,357 305,368 320,372 335,365 348,378 360,380
369,347 377,352 395,355 410,358 422,367 440,360 455,363 475,368 495,375 515,382 532,384
541,352 552,350 575,352 600,355 620,358 635,360 645,370 665,375 687,384
697,350 702,335 712,338 730,347 750,353 780,362 800,372 820,375 840,382 855,384
864,355 872,345 882,338 898,355 915,357 950,357 970,362 985,370 1005,378 1029,384
1037,358 1048,356 1057,345 1080,348 1110,350 1130,348 1150,357 1170,370 1180,376 1185,370 1197,378
1207,357 1225,360 1240,348 1255,358 1285,358 1310,362 1330,368 1358,377
1366,355 1378,350 1390,348 1400,362 1425,357 1450,360 1475,370 1500,377 1526,383`;

function trace(src: string, ky: number, oy: number, amp: number, seed: number) {
  const r = rnd(seed);
  return src.split('\n').map((line, i) => {
    const kx = i < 16 ? 0.7015 : 0.7009;
    const pts = line.trim().split(' ').map((p) => {
      const [x, y] = p.split(',').map(Number);
      return [origin(i) + x * kx, oy + y * ky];
    });
    let d = `M${pts[0][0].toFixed(1)} ${pts[0][1].toFixed(1)}`;
    for (let j = 1; j < pts.length; j++) {
      const [x0, y0] = pts[j - 1];
      const [x1, y1] = pts[j];
      const n = Math.max(1, Math.round((x1 - x0) / 1.4));
      for (let k = 1; k <= n; k++) {
        const e = k === n ? 0.4 : 1;
        d += `L${(x0 + ((x1 - x0) * k) / n).toFixed(1)} ${(y0 + ((y1 - y0) * k) / n + (r() - 0.5) * 2 * amp * e).toFixed(1)}`;
      }
    }
    return d;
  }).join('');
}

const spikes = [434, 434, 457, 445, 433, 433, 435, 433, 451, 440, 442, 440, 440, 0, 450, 460, 433, 445, 442, 438, 438, 440, 440, 438, 440];
const lance = segs.map(([a, b], i) => {
  const w = b - a;
  const p = (f: number) => (a + w * f).toFixed(1);
  const dip = i % 3 === 0 ? 475.4 : 473.5;
  let d = `M${a} 470.2 H${p(0.2)} L${p(0.24)} 471.8 H${p(0.32 + (i % 4) * 0.04)} L${p(0.5)} 472.4 L${p(0.72)} 473 L${p(0.82)} ${dip} L${p(0.9)} 474`;
  const t = spikes[i];
  if (!t) d += `H${b}`;
  else if (t > 444) d += `H${b} M${b} ${t} V${t + 12}${t < 450 ? 'V474' : ''}`;
  else d += `H${p(0.97)} L${(b - 2).toFixed(1)} ${t + 4} L${(b - 0.8).toFixed(1)} ${t} V${t + 2}`;
  return d;
}).join('');

const barX = [888.4, 1009, 1131, 1253, 0, 1491, 1609.5, 1730, 1842.4, 0, 2069.7, 2189, 2307.5, 2428, 2548, 2668.8, 2782.8, 2898.4, 3020.4, 3136, 3248.2, 3367.3, 3487.2, 3602.8, 3718.5];
const K = 0.574;
const barRows: { c: string; base: number; y: number; tops: number[] }[] = [
  { c: C.gba, base: 577, y: 771.2, tops: [552, 525, 511, 525, 0, 500, 489, 544, 523, 0, 494, 508, 531, 477, 489, 494, 525, 494, 489, 520, 491, 489, 529, 517, 480] },
  { c: C.pAudio, base: 738, y: 863.6, tops: [640, 649, 701, 667, 0, 684, 715, 667, 698, 0, 681, 689, 655, 681, 686, 678, 695, 670, 678, 678, 678, 681, 670, 655, 672] },
  { c: C.pFlow, base: 902, y: 957.7, tops: [859, 868, 868, 844, 0, 848, 820, 801, 868, 0, 848, 870, 834, 841, 853, 853, 868, 844, 848, 876, 836, 828, 820, 822, 828] },
  { c: C.pLance, base: 1043, y: 1038.7, tops: [1031, 1040, 968, 1005, 0, 985, 985, 1034, 965, 0, 980, 980, 1034, 997, 997, 997, 968, 991, 991, 965, 994, 994, 1040, 1037, 1002] },
  { c: C.pDcdt, base: 1217, y: 1138.6, tops: [1129, 1166, 1186, 1175, 0, 1195, 1175, 1169, 1172, 0, 1195, 1146, 1126, 1192, 1184, 1166, 1181, 1184, 1186, 1192, 1201, 1195, 1130, 1140, 1178] },
  { c: C.pXrf, base: 1375, y: 1229.3, tops: [1342, 1290, 1347, 1347, 0, 1350, 1350, 1342, 1365, 0, 1365, 1356, 1347, 1338, 1330, 1347, 1359, 1361, 1350, 1365, 1350, 1356, 1336, 1342, 1356] },
];

const laneDefs = [
  { c: C.audio, hi: '100', lo: '14', name: 'Audiometer', ly: 252.3, v: '55.401', ty: 246.7, w: 76, dot: 270 },
  { c: C.flow, hi: '2015', lo: '690', name: 'W. G. Flow', ly: 343.7, v: '1659.5', ty: 329.5, w: 76, dot: 352 },
  { c: C.lance, hi: '9', lo: '2', name: 'Lance Sep.', ly: 438, v: '2.73', ty: 449.3, w: 51, dot: 0 },
  { c: C.dcdt, hi: '11', lo: '0', name: 'dc/dt', ly: 530.7, v: '7.0503', ty: 521, w: 76, dot: 543 },
  { c: C.xrf, hi: '869', lo: '15', name: 'XRF Fe cps', ly: 624.8, v: '476.78', ty: 616.6, w: 76, dot: 640 },
  { c: C.gba, hi: '33', lo: '14', name: 'GBA 1_Dissimilarity_measure', ly: 717, v: '30.266 %', ty: 695.5, w: 95.5, dot: 0 },
  { c: C.pAudio, hi: '39', lo: '10', name: '% Contribution to Dissimilarity from Audiometer GBA 1', ly: 810, v: '9.6749 %', ty: 826, w: 95.5, dot: 0 },
  { c: C.pFlow, hi: '39', lo: '14', name: '% Contribution to Dissimilarity from W. G. Flow GBA 1', ly: 904, v: '33.003 %', ty: 887, w: 95.5, dot: 0 },
  { c: C.pLance, hi: '51', lo: '3', name: '% Contribution to Dissimilarity from Lance Sep. GBA 1', ly: 997, v: '37.529 %', ty: 981, w: 95.5, dot: 0 },
  { c: C.pDcdt, hi: '20', lo: '5', name: '% Contribution to Dissimilarity from dc/dt GBA 1', ly: 1090, v: '9.7683 %', ty: 1091.5, w: 95.5, dot: 0 },
  { c: C.pXrf, hi: '33', lo: '5', name: '% Contribution to Dissimilarity from XRF Fe cps GBA 1', ly: 1184, v: '10.025 %', ty: 1185.6, w: 95.5, dot: 0 },
];

const slashes = segs.map(([a]) => a - 2.5).concat(3813.5).map((x) => {
  const m = x - 2.5;
  return `M${m - 15} 1247 L${m - 1} 1230.5 M${m} 1247 L${m + 14} 1230.5`;
}).join('');

function SeriesLabel({ y, color, children }: { y: number; color: string; children: string }) {
  return (
    <>
      <text x="3804.3" y={y + 1} textAnchor="end" fill="#cfcfcf">{children}</text>
      <text x="3803.2" y={y} textAnchor="end" fill={color}>{children}</text>
    </>
  );
}

function Chart() {
  return (
    <svg className="block h-[1124px] w-[3031px] shrink-0 bg-white" viewBox="808 154 3031 1124" fontFamily="'Noto Sans CJK SC', sans-serif" fontSize="19" letterSpacing=".86">
      {segs.map(([a, b], i) => (
        <g key={i} fill="#f9f9f9">
          <rect x={a} y="201.3" width={b - a} height="29.7" />
          {[323.5, 510.6, 696.6, 883, 1069].map((y) => <rect key={y} x={a} y={y} width={b - a} height="77.3" />)}
          {i === 4 || i === 9 ? (
            <rect x={a} y="190.5" width={b - a} height="10.5" fill={C.golden} />
          ) : (
            <rect x={a} y="220.3" width={b - a} height="10.3" fill={C.batches} />
          )}
        </g>
      ))}
      <rect x="1629" y="171" width="2" height="1067" fill="#bccbdd" />
      <path d={trace(audio, 1 / 3, 0, 2.6, 3)} fill="none" stroke={C.audio} strokeWidth="1.9" />
      <path d={trace(flow, 1 / 3, 0, 0.9, 5)} fill="none" stroke={C.flow} strokeWidth="2" />
      <path d={lance} fill="none" stroke={C.lance} strokeWidth="1.7" />
      <path d={trace(dcdt, K, 440, 0.8, 9)} fill="none" stroke={C.dcdt} strokeWidth="1.8" />
      <path d={trace(xrf, K, 440, 1.1, 11)} fill="none" stroke={C.xrf} strokeWidth="1.8" />
      <path d={segs.map(([, b], i) => (i > 1 ? `M${b} ${i % 3 ? 629 : 624} V${i % 4 ? 638 : 634}` : '')).join('')} stroke={C.xrf} strokeWidth="1" />
      {barRows.map((r) => r.tops.map((t, i) => t > 0 && (
        <rect key={`${r.c}${i}`} x={barX[i]} y={r.y - (r.base - t) * K} width="64.8" height={(r.base - t) * K} fill={r.c === C.pFlow && i === 6 ? '#6493d6' : r.c} />
      )))}
      <path d="M851 1238.4 H3818" stroke="#ccd6eb" strokeWidth="2" />
      <path d={slashes} stroke="#ccd6eb" strokeWidth="1.8" />
      <path d="M1914.5 1238 V1247 M2960.2 1238 V1247" stroke="#ccd6eb" strokeWidth="1.6" />
      <g fill="#8b8f96" textAnchor="middle" fontSize="19.4" letterSpacing="0">
        <text x="1915" y="1270.5">18:00</text>
        <text x="2962" y="1270.5">15:00</text>
      </g>
      {laneDefs.map((l, i) => {
        const top = 230 + i * 93.3;
        return (
          <g key={l.name}>
            <rect x="861" y={top} width="2" height="75.5" fill={l.c} />
            <g fill={l.c} textAnchor="end">
              <text x="855" y={top + 22.5}>{l.hi}</text>
              <text x="855" y={top + 65}>{l.lo}</text>
            </g>
          </g>
        );
      })}
      <SeriesLabel y={192.7} color={C.golden}>Golden Batch</SeriesLabel>
      <SeriesLabel y={222.5} color={C.batches}>Batches not including GB</SeriesLabel>
      {laneDefs.map((l) => <SeriesLabel key={l.name} y={l.ly} color={l.c}>{l.name}</SeriesLabel>)}
      {laneDefs.map((l) => (
        <g key={l.name}>
          {l.dot > 0 && <circle cx="1630" cy={l.dot} r="5.8" fill={l.c} stroke="#fff" strokeWidth="1" />}
          <rect x="1636.3" y={l.ty} width={l.w} height="31" rx="3" fill={l.c} stroke="#fff" strokeOpacity=".6" strokeWidth=".8" />
          <text x="1640.5" y={l.ty + 22.8} fill={l.c === C.pDcdt ? '#111' : '#fff'} letterSpacing={l.w === 95.5 ? 1 : 1.3}>{l.v}</text>
        </g>
      ))}
      <rect x="1532.5" y="1224" width="193" height="27" rx="3" fill="#e7f2f0" stroke="#a9b3b1" strokeWidth="1.5" />
      <text x="1534.5" y="1245" fill={C.brand} fontSize="19" letterSpacing="1.95">6/5/2021 13:11:19</text>
    </svg>
  );
}

/* ------------------------------------------------------------------ */
/* Time range controls                                                */
/* ------------------------------------------------------------------ */
const hours = ['6. May', '03:00', '06:00', '09:00', '12:00', '15:00', '18:00', '21:00', '7. May', '03:00', '06:00', '09:00', '12:00', '15:00', '18:00', '21:00', '8. May', '03:00', '06:00'];

function Arrow({ up }: { up?: boolean }) {
  return (
    <svg className={`${up ? 'rotate-180' : ''} h-[23px] w-[17px]`} viewBox="0 0 17 23" fill="#007960">
      <path d="M7 0 H10.2 V13 H17 L8.6 23 L0 13 H7 Z" />
    </svg>
  );
}

function TimeRange() {
  return (
    <>
      <div className="flex h-[40px] shrink-0 items-center bg-white pl-[13px] pr-[28px] text-[17.5px] leading-[24px] text-[#007960]">
        <Arrow />
        <span className="-mt-[5px] ml-[13px] w-[129px]">5/5/2021 22:31</span>
        <span className="-mt-[5px] underline underline-offset-[2px]">AEST</span>
        <div className="ml-[1092px] flex items-center">
          <svg width="24" height="23" viewBox="0 0 24 23" fill="#007960"><path d="M0 11.5 L11.5 0 V11 L23 0 V23 L11.5 12 V23 Z" /></svg>
          <svg className="ml-[25px]" width="13" height="23" viewBox="0 0 13 23" fill="#007960"><path d="M0 11.5 L12.5 0 V23 Z" /></svg>
          <span className="-mt-[5px] ml-[23px] w-[67px]">2.4 days</span>
          <svg className="ml-[23px]" width="13" height="23" viewBox="0 0 13 23" fill="#007960"><path d="M12.5 11.5 L0 0 V23 Z" /></svg>
          <svg className="ml-[24px]" width="24" height="23" viewBox="0 0 24 23" fill="#007960"><path d="M24 11.5 L12 0 V11 L0.5 0 V23 L12 12 V23 Z" /></svg>
          <svg className="ml-[23px]" width="16" height="23" viewBox="0 0 16 23" fill="#007960"><path d="M0 0 L11 11 V0 H15 V23 H11 V12 L0 23 Z" /></svg>
          <FaSyncAlt className="-mt-[5px] ml-[25px] h-[16px] w-[16px]" />
        </div>
        <span className="-mt-[5px] ml-auto mr-[8px]">8/5/2021 08:06</span>
        <span className="-mt-[5px] underline underline-offset-[2px]">AEST</span>
      </div>
      <div className="flex h-[108px] shrink-0 flex-col border-t border-[#e0e0e0] bg-[#f6f6f6] pt-[7px]">
        <div className="flex h-[33px] items-center pl-[34px]">
          <span className="h-[33px] w-[8px] border-[3px] border-[#007960] bg-white" />
          <span className="h-[24px] w-[2916px] border-y-[3px] border-[#007960] bg-white" />
          <span className="h-[33px] w-[9px] border-[3px] border-[#007960] bg-white" />
          <Condition color={C.brand} className="ml-[13px] mt-[5px] h-[24px] w-[20px]" />
        </div>
        <div className="-mt-[4px] flex pl-[39.5px]">
          {hours.map((h, i) => (
            <div key={i} className="flex w-[152.1px] shrink-0 flex-col items-center text-[15.6px] leading-[18px] text-[#999]">
              <i className="h-[5px] w-[2px] bg-[#ccc]" />
              {h}
            </div>
          ))}
        </div>
        <div className="mt-[9px] flex h-[36px] items-center pl-[13px] pr-[33px] text-[17.5px] leading-[24px] text-[#007960]">
          <Arrow up />
          <span className="ml-[13px] w-[1447px] pt-[3px]">5/5/2021</span>
          <span className="pt-[3px] text-[16.1px]">2.4 days</span>
          <span className="ml-auto pt-[3px]">8/5/2021</span>
        </div>
      </div>
    </>
  );
}

/* ------------------------------------------------------------------ */
/* Details and capsules                                               */
/* ------------------------------------------------------------------ */
const details: { n: string; v?: string; c: string; p?: boolean; edit?: boolean }[] = [
  { n: 'Audiometer', v: '55.401', c: C.audio },
  { n: 'W. G. Flow', v: '1659.5', c: C.flow },
  { n: 'Lance Sep.', v: '2.73', c: C.lance },
  { n: 'dc/dt', v: '7.0503', c: C.dcdt },
  { n: 'XRF Fe cps', v: '476.78', c: C.xrf },
  { n: 'GBA 1_Dissimilarity_measure', v: '30.266', c: C.gba, p: true },
  { n: '% Contribution to Dissimilarity from Audiometer GBA 1', v: '9.6749', c: C.pAudio, p: true },
  { n: '% Contribution to Dissimilarity from W. G. Flow GBA 1', v: '33.003', c: C.pFlow, p: true },
  { n: '% Contribution to Dissimilarity from Lance Sep. GBA 1', v: '37.529', c: C.pLance, p: true },
  { n: '% Contribution to Dissimilarity from dc/dt GBA 1', v: '9.7683', c: C.pDcdt, p: true },
  { n: '% Contribution to Dissimilarity from XRF Fe cps GBA 1', v: '10.025', c: C.pXrf, p: true },
  { n: 'Golden Batch', c: C.golden, edit: true },
  { n: 'Batches not including GB', c: C.batches, edit: true },
];

function Details() {
  return (
    <div className="flex w-[2264.5px] shrink-0 flex-col">
      <div className="flex h-[43px] shrink-0 items-center bg-[#007960] pl-[16px] pr-[8px] text-[19.2px] text-white">
        <AreaChart className="h-[19px] w-[24px]" />
        <span className="ml-[5px]">Details</span>
        <span className="ml-auto mr-[17px]">6 May 2021 13:11</span>
        <span className="flex h-[35px] w-[125px] items-center rounded-[5px] border border-[#ccc] bg-white pl-[8px] text-[16.2px] text-[#333]">
          <FaCogs className="mr-[4px] h-[20px] w-[22px]" />Customize
        </span>
      </div>
      <div className="flex min-h-0 flex-1 bg-white">
        <div className="flex flex-1 flex-col overflow-hidden text-[19.25px] leading-[30px]">
          <div className="flex h-[46px] shrink-0 items-center border-b-[3px] border-[#dee2e6] pt-[3px] font-medium text-[#2c2c2c]">
            <span className="ml-[124px] w-[32px]"><Cross className="h-[15px] w-[15px] text-[#555]" /></span>
            <span className="w-[79px]"><Checkbox /></span>
            <span className="w-[23px]"><Sort /></span>
            <span className="mr-[13px]">Name</span>
            <Sort />
            <span className="-mt-[7px] ml-auto mr-[14px]"><TablePlus color="#8a8f96" dark="#222" /></span>
          </div>
          {details.map((r, i) => (
            <div key={r.n} className={`${i % 2 ? 'bg-white' : 'bg-[#f8f8f8]'} flex h-[38.2px] shrink-0 items-center border-b-2 border-[#dfe3e7]`}>
              <span className="w-[50px] pl-[7px] text-[#007960]">{r.edit && <FaRegEdit className="h-[18px] w-[20px]" />}</span>
              <span className="w-[40px] text-[#007960]"><FaRocket className="h-[19px] w-[19px]" /></span>
              <span className="w-[34px] text-[#007960]"><FaInfoCircle className="h-[18px] w-[18px]" /></span>
              <span className="w-[32px] text-[#007960]"><Cross className="h-[15px] w-[15px]" /></span>
              <span className="-mt-px w-[36px]"><Checkbox /></span>
              <span className="-mt-[7px] w-[36px]">{r.edit ? <Condition color={r.c} className="ml-[2px] h-[23px] w-[20px]" /> : <Trend color={r.c} />}</span>
              <span className="w-[30px] text-[#777]">{r.p ? '%' : ''}</span>
              <span className="font-medium text-[#2c2c2c]">{r.n}</span>
              <span className="ml-auto pr-[5px]" style={{ color: r.c }}>{r.v}</span>
            </div>
          ))}
        </div>
        <div className="w-[13px] shrink-0 rounded-b-full bg-[#ececec]"><div className="h-[532px] rounded-full bg-[#b4b4b4]" /></div>
      </div>
    </div>
  );
}

const capsules: [string, string, boolean?][] = [
  ['6 May 2021 17:44', '00:18:11.000'], ['7 May 2021 19:26', '00:18:27.000'], ['7 May 2021 12:26', '00:18:28.000'],
  ['8 May 2021 04:45', '00:19:07.000'], ['6 May 2021 20:02', '00:19:30.000', true], ['6 May 2021 10:43', '00:19:44.000'],
  ['7 May 2021 21:44', '00:19:56.000'], ['6 May 2021 22:22', '00:19:58.000'], ['8 May 2021 02:25', '00:20:03.000'],
  ['8 May 2021 07:04', '00:20:10.000'], ['7 May 2021 00:42', '00:20:12.000'], ['7 May 2021 07:44', '00:20:15.000'],
];

function Capsules() {
  return (
    <div className="flex flex-1 flex-col">
      <div className="flex h-[43px] shrink-0 items-center bg-[#007960] pl-[20px] pr-[10px] text-[19.2px] text-white">
        <CapsuleIcon color="#fff" className="-mt-[7px] h-[25px] w-[16px]" />
        <span className="ml-[8px]">Capsules</span>
        <span className="ml-auto flex h-[35px] w-[36px] items-center justify-center rounded-l-[5px] border border-[#ccc] bg-white">
          <FaSearchPlus className="h-[18px] w-[18px] text-[#222]" />
        </span>
        <span className="flex h-[35px] w-[35px] items-center justify-center rounded-r-[5px] border border-l-0 border-[#ccc] bg-white">
          <span className="flex h-[16px] w-[17px] items-center justify-center rounded-[3px] border-2 border-[#666]"><i className="h-[2px] w-[9px] bg-[#666]" /></span>
        </span>
      </div>
      <div className="flex min-h-0 flex-1 bg-white">
        <div className="flex flex-1 flex-col overflow-hidden text-[19.2px] leading-[30px]">
          <div className="flex h-[52px] shrink-0 items-center border-b-[3px] border-[#dee2e6] pt-[10px] font-medium text-[#2c2c2c]">
            <span className="w-[83px] pl-[11px]"><Checkbox /></span>
            <span className="flex w-[177.3px] items-center gap-[11px]">Start<Sort /></span>
            <span className="flex w-[122px] items-center gap-[13px] text-[#007960]">
              Duration
              <svg className="-mt-[14px]" width="13" height="7" viewBox="0 0 13 7" fill="#007960"><path d="M6.5 0 L13 7 H0 Z" /></svg>
            </span>
            <span className="flex w-[134.3px] items-center gap-[12px]">Similarity<Sort /></span>
            <span className="-mt-[17px] flex">
              <TablePlus color="#8a8f96" dark="#222" />
              <span className="-mb-2 -mt-2 ml-[8px] mr-[29.5px] h-[40px] w-px bg-[#ddd]" />
              <TablePlus color="#5cb888" dark={C.audio} />
              <span className="ml-[27.7px]"><TablePlus color="#c577bd" dark={C.flow} /></span>
              <span className="ml-[27.7px]"><TablePlus color="#e29a75" dark={C.lance} /></span>
            </span>
          </div>
          {capsules.map(([s, d, gold], i) => (
            <div key={s} className={`${i % 2 ? 'bg-white' : 'bg-[#f8f8f8]'} flex h-[38.2px] shrink-0 items-center border-b-2 border-[#dfe3e7] text-[#333]`}>
              <span className="w-[52px] pl-[11px]"><Checkbox /></span>
              <span className="-mt-[3px] w-[31px]"><CapsuleIcon color={gold ? C.golden : C.batches} className="h-[24px] w-[16px]" /></span>
              <span className="w-[177.3px]">{s}</span>
              <span>{d}</span>
            </div>
          ))}
          <div className="flex min-h-0 flex-1 overflow-hidden bg-[#f8f8f8]">
            <span className="w-[52px] pl-[11px] pt-[10px]"><Checkbox /></span>
            <span className="mt-[4px] w-[31px]"><CapsuleIcon color={C.batches} className="h-[24px] w-[16px]" /></span>
            <span className="mt-[3px] text-[#333]">7 May 2021 14:09</span>
          </div>
          <div className="h-[12px] shrink-0 rounded-full bg-[#ececec]"><div className="h-full w-[455px] rounded-full bg-[#b4b4b4]" /></div>
        </div>
        <div className="w-[13px] shrink-0 pb-[12px]"><div className="h-full rounded-full bg-[#ececec]"><div className="h-[272px] rounded-full bg-[#b4b4b4]" /></div></div>
      </div>
    </div>
  );
}

export default function App() {
  return (
    <div className="flex h-[2005px] w-[3839px] flex-col overflow-hidden bg-white font-['Noto_Sans_CJK_SC',sans-serif]">
      <Header />
      <div className="flex min-h-0 flex-1">
        <Sidebar />
        <Splitter />
        <ToolsPanel />
        <Splitter />
        <main className="flex min-w-0 flex-1 flex-col">
          <Toolbar />
          <Chart />
          <TimeRange />
          <div className="flex min-h-0 flex-1 pr-px">
            <Details />
            <div className="flex w-[13px] shrink-0 items-center justify-center border-x border-[#ddd] bg-[#f4f4f4]">
              <i className="mr-[2px] h-[14px] w-[2px] bg-[#888]" /><i className="h-[14px] w-[2px] bg-[#888]" />
            </div>
            <Capsules />
          </div>
        </main>
      </div>
    </div>
  );
}
